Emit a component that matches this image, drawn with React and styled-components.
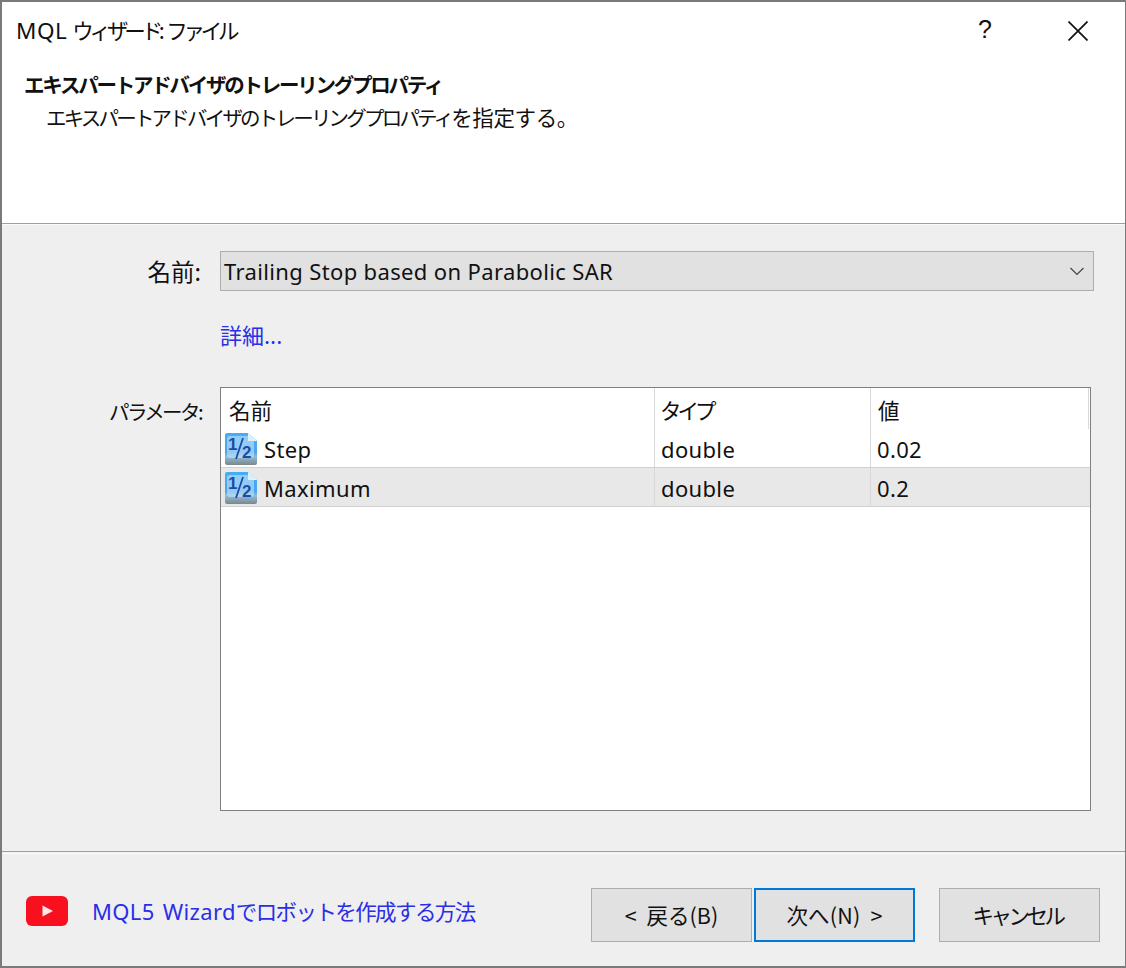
/* Basic */
import React from "react";
/* Styles */
import styled, { createGlobalStyle } from "styled-components";

const FONT = `"Noto Sans", "Noto Sans CJK JP", sans-serif`;
const JP = `"Noto Sans CJK JP", "Noto Sans", sans-serif`;

const GlobalStyle = createGlobalStyle`
    html, body {
        margin: 0;
        padding: 0;
        background: #ffffff;
    }
    * {
        box-sizing: border-box;
    }
`;
const Window = styled.div`
    width: 1126px;
    height: 968px;
    display: flex;
    flex-direction: column;
    border: 1px solid #7a7a7a;
    border-top-width: 2px;
    border-left-width: 2px;
    border-bottom-width: 2px;
    font-family: ${FONT};
    color: #111111;
    background: #efefef;
    overflow: hidden;
`;
const Header = styled.header`
    height: 222px;
    flex: none;
    background: #ffffff;
    border-bottom: 1px solid #a0a0a0;
    padding: 0 14px;
`;
const TitleBar = styled.div`
    height: 58px;
    display: flex;
    align-items: center;
    justify-content: space-between;
`;
const WindowTitle = styled.div`
    font-family: ${JP};
    font-size: 21.5px;
    letter-spacing: -4.2px;
    word-spacing: 5px;
    margin-bottom: 3px;
`;
const TitleLatin = styled.span`
    font-family: ${FONT};
    font-size: 22.5px;
    letter-spacing: 0.5px;
    margin-right: 5px;
`;
const TitleButtons = styled.div`
    display: flex;
    align-items: center;
    gap: 76px;
    margin-right: 23px;
`;
const HelpMark = styled.span`
    font-family: "Liberation Sans", sans-serif;
    font-size: 25px;
    line-height: 1;
    margin-bottom: 3px;
`;
const Heading = styled.div`
    font-family: ${JP};
    font-size: 20.5px;
    line-height: 30px;
    font-weight: 700;
    letter-spacing: -2.25px;
    margin: 9px 0 0 8px;
`;
const Subheading = styled.div`
    font-family: ${JP};
    font-size: 20.5px;
    line-height: 30px;
    letter-spacing: -2.8px;
    margin: 3px 0 0 30px;
`;
const SubheadingTail = styled.span`
    font-size: 21.5px;
    letter-spacing: -0.4px;
`;
const Body = styled.main`
    flex: 1;
    border-top: 1px solid #fafafa;
    padding-top: 26px;
    display: grid;
    grid-template-columns: 201px 1fr;
    grid-template-rows: 40px 96px 424px;
    column-gap: 17px;
    align-content: start;
`;
const Label = styled.div`
    font-family: ${JP};
    font-size: ${props => props.$size}px;
    letter-spacing: ${props => props.$spacing}px;
    text-align: right;
    line-height: 30px;
    padding-top: ${props => props.$top}px;
    padding-right: 2px;
`;
const Combo = styled.div`
    width: 874px;
    height: 40px;
    background: #e1e1e1;
    border: 1px solid #adadad;
    display: flex;
    align-items: center;
    justify-content: space-between;
    padding: 0 9px 0 3px;
    font-size: 22px;
    letter-spacing: 0.36px;
`;
const Link = styled.a`
    color: #2a2ee6;
    font-family: ${JP};
    text-decoration: none;
`;
const DetailLink = styled(Link)`
    font-size: 22px;
    letter-spacing: 0;
    padding-top: 27px;
`;
const Table = styled.div`
    width: 871px;
    height: 424px;
    background: #ffffff;
    border: 1px solid #808080;
`;
const Row = styled.div`
    display: grid;
    grid-template-columns: 434px 216px 1fr;
    height: ${props => props.$height}px;
    background: ${props => (props.$selected ? "#e8e8e8" : "#ffffff")};
    border-bottom: ${props => (props.$head ? "none" : "1px solid #d0d0d0")};
`;
const Cell = styled.div`
    display: flex;
    align-items: center;
    gap: 6px;
    padding-left: ${props => props.$pad}px;
    padding-top: 2px;
    border-right: 1px solid #d9d9d9;
    font-size: 22px;
    letter-spacing: 0.35px;
    &:last-child {
        border-right: none;
    }
`;
const HeadCell = styled(Cell)`
    font-family: ${JP};
    font-size: 21.5px;
    letter-spacing: ${props => props.$spacing}px;
    &:last-child {
        border-right: 1px solid #d9d9d9;
        margin-right: 1px;
    }
`;
const FooterDivider = styled.div`
    flex: none;
    height: 3px;
    border-top: 1px solid #a0a0a0;
    border-bottom: 1px solid #fafafa;
`;
const Footer = styled.footer`
    flex: none;
    height: 112px;
    display: flex;
    align-items: flex-start;
    padding: 34px 0 0 24px;
`;
const HowTo = styled.div`
    display: flex;
    align-items: center;
    gap: 24px;
    width: 565px;
    height: 46px;
`;
const HowToLink = styled(Link)`
    font-family: ${FONT};
    font-size: 22px;
    letter-spacing: 0.35px;
    word-spacing: 2px;
    padding-bottom: 2px;
`;
const HowToKana = styled.span`
    font-family: ${JP};
    font-size: 21.5px;
    letter-spacing: -1.6px;
`;
const Button = styled.button`
    width: 161px;
    height: 54px;
    margin-left: ${props => props.$gap || 0}px;
    background: #e1e1e1;
    border: ${props => (props.$focused ? "2px solid #0078d7" : "1px solid #adadad")};
    font-family: ${JP};
    font-size: 21.5px;
    letter-spacing: ${props => props.$spacing}px;
    word-spacing: 5px;
    color: #111111;
    padding: 0 ${props => props.$right || 0}px 2px 0;
`;

const FractionIcon = () => (
    <svg width="34" height="35" viewBox="0 0 34 35" style={{ flex: "none" }}>
        <defs>
            <linearGradient id="fractionFill" x1="0" y1="0" x2="0" y2="1">
                <stop offset="0" stopColor="#46aef5" />
                <stop offset="0.6" stopColor="#4aa6ec" />
                <stop offset="0.74" stopColor="#90bcd6" />
                <stop offset="1" stopColor="#7c878c" />
            </linearGradient>
        </defs>
        <path d="M1 3 Q1 1 3 1 H24 L33 9 V31 Q33 33 31 33 H3 Q1 33 1 31 Z" fill="url(#fractionFill)" />
        <path d="M24 1 V9 H33 Z" fill="#e8f6ff" />
        <rect x="3" y="4" width="27" height="22" rx="3" fill="#cfeafc" opacity="0.55" />
        <text x="4" y="18" fontFamily="Liberation Sans, sans-serif" fontWeight="700" fontSize="17" fill="#1c4ca6">1</text>
        <path d="M12 27 L19 6" stroke="#1c4ca6" strokeWidth="1.8" />
        <text x="18" y="26" fontFamily="Liberation Sans, sans-serif" fontWeight="700" fontSize="17" fill="#1c4ca6">2</text>
    </svg>
);

const YoutubeIcon = () => (
    <svg width="42" height="30" viewBox="0 0 42 30" style={{ flex: "none" }}>
        <rect x="0" y="0" width="42" height="30" rx="6" fill="#f9101f" />
        <path d="M16.5 9.5 L27 15 L16.5 20.5 Z" fill="#ffe8e8" />
    </svg>
);

const CloseIcon = () => (
    <svg width="20" height="20" viewBox="0 0 20 20">
        <path d="M0.5 0.5 L19.5 19.5 M19.5 0.5 L0.5 19.5" stroke="#111111" strokeWidth="1.7" />
    </svg>
);

const ChevronIcon = () => (
    <svg width="14" height="9" viewBox="0 0 14 9">
        <path d="M0.5 1 L7 7.5 L13.5 1" fill="none" stroke="#444444" strokeWidth="1.2" />
    </svg>
);

const PARAMS = [
    { name: "Step", type: "double", value: "0.02" },
    { name: "Maximum", type: "double", value: "0.2", selected: true }
];

const App = () => {
    return (
        <Window>
            <GlobalStyle />
            <Header>
                <TitleBar>
                    <WindowTitle>
                        <TitleLatin>MQL</TitleLatin>ウィザード: ファイル
                    </WindowTitle>
                    <TitleButtons>
                        <HelpMark>?</HelpMark>
                        <CloseIcon />
                    </TitleButtons>
                </TitleBar>
                <Heading>エキスパートアドバイザのトレーリングプロパティ</Heading>
                <Subheading>
                    エキスパートアドバイザのトレーリングプロパティ<SubheadingTail>を指定する。</SubheadingTail>
                </Subheading>
            </Header>
            <Body>
                <Label $top={5} $size={23.5} $spacing={0}>名前:</Label>
                <Combo>
                    Trailing Stop based on Parabolic SAR
                    <ChevronIcon />
                </Combo>
                <span />
                <DetailLink href="#">詳細...</DetailLink>
                <Label $top={9} $size={20.5} $spacing={-2.6}>パラメータ:</Label>
                <Table>
                    <Row $head $height={41}>
                        <HeadCell $pad={8} $spacing={0}>名前</HeadCell>
                        <HeadCell $pad={5} $spacing={-4}>タイプ</HeadCell>
                        <HeadCell $pad={7} $spacing={0}>値</HeadCell>
                    </Row>
                    {PARAMS.map(param => (
                        <Row key={param.name} $height={39} $selected={param.selected}>
                            <Cell $pad={3}>
                                <FractionIcon />
                                {param.name}
                            </Cell>
                            <Cell $pad={6}>{param.type}</Cell>
                            <Cell $pad={6}>{param.value}</Cell>
                        </Row>
                    ))}
                </Table>
            </Body>
            <FooterDivider />
            <Footer>
                <HowTo>
                    <YoutubeIcon />
                    <HowToLink href="#">
                        MQL5 Wizard<HowToKana>でロボットを作成する方法</HowToKana>
                    </HowToLink>
                </HowTo>
                <Button $spacing={0}>&lt; 戻る(B)</Button>
                <Button $focused $gap={2} $spacing={0.2}>次へ(N) &gt;</Button>
                <Button $gap={24} $spacing={-3.5} $right={4}>キャンセル</Button>
            </Footer>
        </Window>
    );
};

export default App;
